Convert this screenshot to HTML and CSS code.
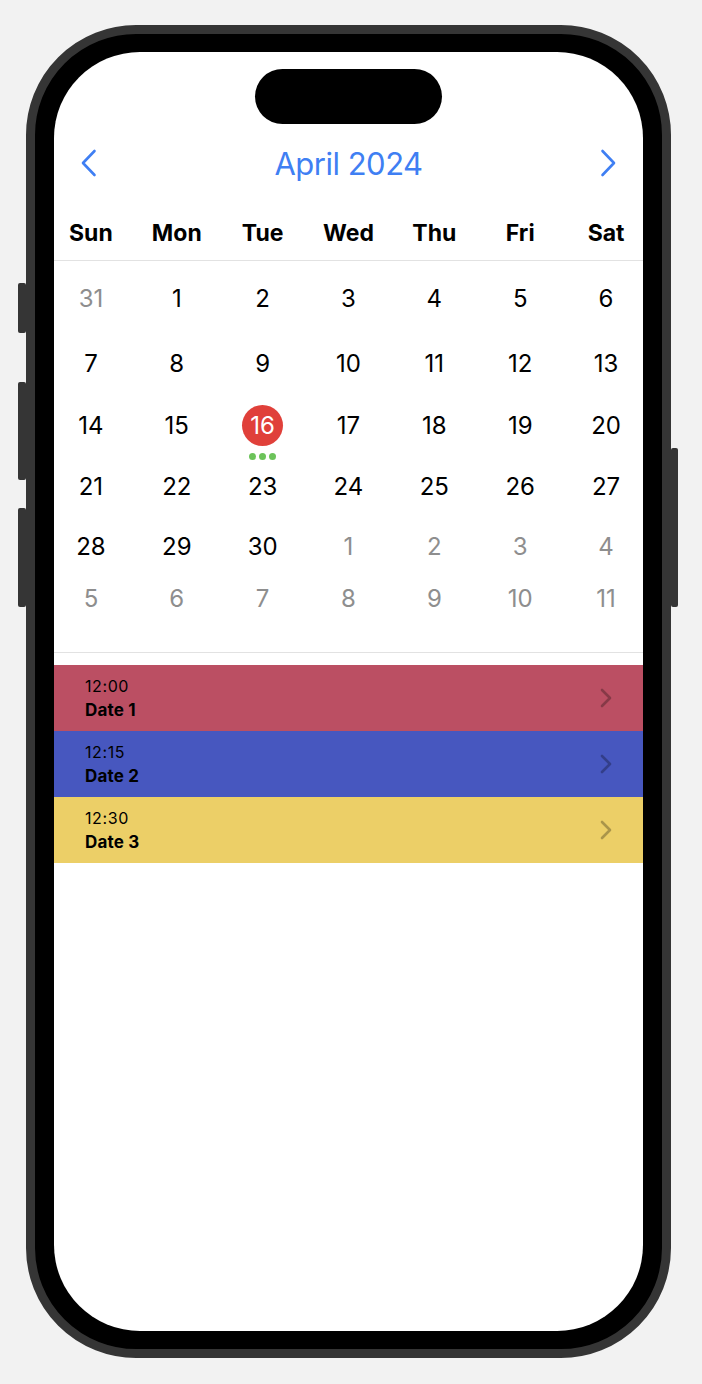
FILE: index.html
```html
<!DOCTYPE html>
<html lang="en">
<head>
    <meta charset="UTF-8">
    <meta name="viewport" content="width=device-width, initial-scale=1.0">
    <title>Calendar</title>
    <link rel="stylesheet" href="styles.css">
</head>
<body>

<div class="phone">
    <div class="side-btn btn-action"></div>
    <div class="side-btn btn-vol-up"></div>
    <div class="side-btn btn-vol-down"></div>
    <div class="side-btn btn-power"></div>

    <div class="screen">
        <div class="island"></div>

        <div class="month-header">
            <svg class="nav-arrow" width="17" height="28" viewBox="0 0 17 28">
                <path d="M14.5 2 L3 14 L14.5 26" fill="none" stroke="#3f7ff3" stroke-width="2.6" stroke-linecap="round" stroke-linejoin="round"/>
            </svg>
            <span class="month-title">April 2024</span>
            <svg class="nav-arrow" width="17" height="28" viewBox="0 0 17 28">
                <path d="M2.5 2 L14 14 L2.5 26" fill="none" stroke="#3f7ff3" stroke-width="2.6" stroke-linecap="round" stroke-linejoin="round"/>
            </svg>
        </div>

        <div class="weekdays">
            <span>Sun</span>
            <span>Mon</span>
            <span>Tue</span>
            <span>Wed</span>
            <span>Thu</span>
            <span>Fri</span>
            <span>Sat</span>
        </div>

        <div class="days">
            <span class="other">31</span><span>1</span><span>2</span><span>3</span><span>4</span><span>5</span><span>6</span>
            <span>7</span><span>8</span><span>9</span><span>10</span><span>11</span><span>12</span><span>13</span>
            <span>14</span><span>15</span>
            <span class="today"><b>16</b><i class="dots"><em></em><em></em><em></em></i></span>
            <span>17</span><span>18</span><span>19</span><span>20</span>
            <span>21</span><span>22</span><span>23</span><span>24</span><span>25</span><span>26</span><span>27</span>
            <span>28</span><span>29</span><span>30</span><span class="other">1</span><span class="other">2</span><span class="other">3</span><span class="other">4</span>
            <span class="other">5</span><span class="other">6</span><span class="other">7</span><span class="other">8</span><span class="other">9</span><span class="other">10</span><span class="other">11</span>
        </div>

        <div class="events">
            <div class="event red">
                <div class="event-text">
                    <span class="time">12:00</span>
                    <span class="name">Date 1</span>
                </div>
                <svg class="chevron" width="12" height="20" viewBox="0 0 12 20"><path d="M2 2 L10 10 L2 18" fill="none" stroke="rgba(0,0,0,0.28)" stroke-width="2.6" stroke-linecap="round" stroke-linejoin="round"/></svg>
            </div>
            <div class="event blue">
                <div class="event-text">
                    <span class="time">12:15</span>
                    <span class="name">Date 2</span>
                </div>
                <svg class="chevron" width="12" height="20" viewBox="0 0 12 20"><path d="M2 2 L10 10 L2 18" fill="none" stroke="rgba(0,0,0,0.28)" stroke-width="2.6" stroke-linecap="round" stroke-linejoin="round"/></svg>
            </div>
            <div class="event yellow">
                <div class="event-text">
                    <span class="time">12:30</span>
                    <span class="name">Date 3</span>
                </div>
                <svg class="chevron" width="12" height="20" viewBox="0 0 12 20"><path d="M2 2 L10 10 L2 18" fill="none" stroke="rgba(0,0,0,0.28)" stroke-width="2.6" stroke-linecap="round" stroke-linejoin="round"/></svg>
            </div>
        </div>
    </div>
</div>

</body>
</html>
```

FILE: styles.css
```css
body {
    margin: 0;
    padding: 25px 0 0 26px;
    background: #f2f2f2;
    font-family: 'Inter', 'Liberation Sans', sans-serif;
    height: 1384px;
    box-sizing: border-box;
    overflow: hidden;
}
.phone {
    position: relative;
    width: 645px;
    height: 1333px;
    box-sizing: border-box;
    border: 9px solid #353535;
    background: #000;
    border-radius: 110px;
    padding: 18px 19px 18px 19px;
}
.side-btn {
    position: absolute;
    width: 8px;
    background: #353535;
    border-radius: 2px;
}
.btn-action {
    left: -17px;
    top: 249px;
    height: 50px;
}
.btn-vol-up {
    left: -17px;
    top: 348px;
    height: 98px;
}
.btn-vol-down {
    left: -17px;
    top: 474px;
    height: 99px;
}
.btn-power {
    right: -16px;
    top: 414px;
    height: 159px;
    width: 7px;
}
.screen {
    background: #fff;
    height: 100%;
    border-radius: 86px;
    overflow: hidden;
}
.island {
    width: 187px;
    height: 55px;
    margin: 17px auto 0;
    background: #000;
    border-radius: 28px;
}
.month-header {
    display: flex;
    justify-content: space-between;
    align-items: center;
    height: 40px;
    margin-top: 19px;
    padding: 0 26px;
}
.month-title {
    color: #3f7ff3;
    font-size: 31px;
    letter-spacing: -0.5px;
}
.weekdays {
    display: grid;
    grid-template-columns: repeat(7, 1fr);
    margin: 30px -6px 0;
    height: 40px;
    align-items: center;
    padding-bottom: 7px;
    border-bottom: 1px solid #e2e2e2;
}
.weekdays span {
    text-align: center;
    font-size: 23px;
    font-weight: 700;
    color: #000;
}
.days {
    display: grid;
    grid-template-columns: repeat(7, 1fr);
    grid-template-rows: 66px 64px 61px 61px 59px 45px;
    margin: 0 -6px;
    padding: 4px 0 31px;
    border-bottom: 1px solid #e2e2e2;
}
.days span {
    display: flex;
    align-items: center;
    justify-content: center;
    font-size: 24px;
    color: #000;
    position: relative;
}
.days .other {
    color: #8e8e8e;
}
.days .today b {
    font-weight: 400;
    color: #fff;
    background: #e0403a;
    width: 41px;
    height: 41px;
    border-radius: 50%;
    display: flex;
    align-items: center;
    justify-content: center;
}
.dots {
    position: absolute;
    left: 0;
    right: 0;
    bottom: -4px;
    display: flex;
    justify-content: center;
    gap: 3px;
}
.dots em {
    width: 7px;
    height: 7px;
    border-radius: 50%;
    background: #6cc35a;
}
.events {
    margin-top: 12px;
}
.event {
    height: 66px;
    display: flex;
    align-items: center;
    justify-content: space-between;
    padding: 0 31px 0 31px;
}
.event-text {
    display: flex;
    flex-direction: column;
    gap: 4px;
    color: #000;
}
.time {
    font-size: 16px;
    letter-spacing: 0.6px;
}
.name {
    font-size: 17px;
    font-weight: 700;
    letter-spacing: 0.2px;
}
.red {
    background: #bb4f63;
}
.blue {
    background: #4757bf;
}
.yellow {
    background: #eccf67;
}
```
